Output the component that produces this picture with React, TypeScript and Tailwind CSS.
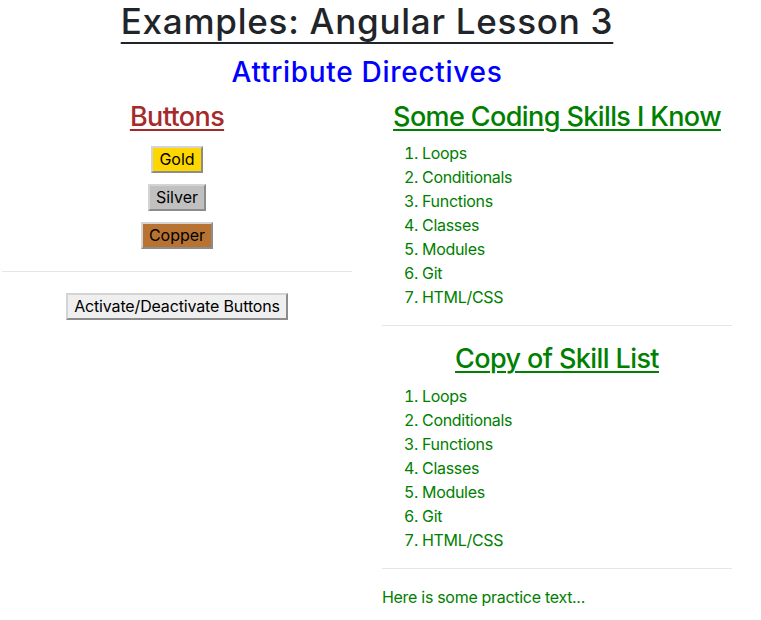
import React from 'react';

const skills = ['Loops', 'Conditionals', 'Functions', 'Classes', 'Modules', 'Git', 'HTML/CSS'];

const metalButtons = [
  { label: 'Gold', bg: 'bg-[#ffd700]' },
  { label: 'Silver', bg: 'bg-[#c0c0c0]' },
  { label: 'Copper', bg: 'bg-[#b87333]' },
];

const btnBase =
  'h-[27px] border-2 border-t-[#d4d4d4] border-l-[#d4d4d4] border-b-[#8c8c8c] border-r-[#8c8c8c] px-[6px] text-base leading-[21px] text-black';

const h3Class =
  'text-[27px] leading-[34px] font-medium tracking-[-0.6px] underline decoration-2 underline-offset-[3px]';

function SkillList({ top }: { top: string }) {
  return (
    <ol className={`list-decimal pl-10 ${top} text-base leading-6 tracking-[-0.3px]`}>
      {skills.map((s) => (
        <li key={s}>{s}</li>
      ))}
    </ol>
  );
}

export default function App() {
  return (
    <div className="w-[761px] min-h-[620px] bg-white font-['Inter',sans-serif] text-[#212529]">
      <div className="w-[730px] ml-[2px]">
        {/* Page heading */}
        <h1 className="text-center text-[35px] leading-[42px] font-medium tracking-[0.75px] underline decoration-2 underline-offset-[8px]">
          Examples: Angular Lesson 3
        </h1>
        <h2 className="mt-[13px] text-center text-[28px] leading-[34px] font-medium tracking-[0.7px] text-[#0000ff]">
          Attribute Directives
        </h2>

        <div className="mt-[11px] flex gap-[30px]">
          {/* Left column */}
          <div className="w-[350px] flex flex-col items-center">
            <h3 className={`${h3Class} text-[#a52a2a]`}>Buttons</h3>
            <div className="mt-3 flex flex-col items-center gap-[11px]">
              {metalButtons.map((b) => (
                <button key={b.label} className={`${btnBase} ${b.bg}`}>
                  {b.label}
                </button>
              ))}
            </div>
            <hr className="mt-[22px] w-full border-t border-[#e6e6e6]" />
            <button className={`${btnBase} bg-[#efefef] mt-[21px] tracking-[-0.15px]`}>
              Activate/Deactivate Buttons
            </button>
          </div>

          {/* Right column */}
          <div className="w-[350px] text-[#008000]">
            <h3 className={`${h3Class} text-center`}>Some Coding Skills I Know</h3>
            <SkillList top="mt-[7px]" />
            <hr className="mt-4 border-t border-[#e6e6e6]" />
            <h3 className={`${h3Class} mt-4 text-center`}>Copy of Skill List</h3>
            <SkillList top="mt-2" />
            <hr className="mt-4 border-t border-[#e6e6e6]" />
            <p className="mt-4 text-base leading-6 tracking-[-0.3px]">Here is some practice text...</p>
          </div>
        </div>
      </div>
    </div>
  );
}
